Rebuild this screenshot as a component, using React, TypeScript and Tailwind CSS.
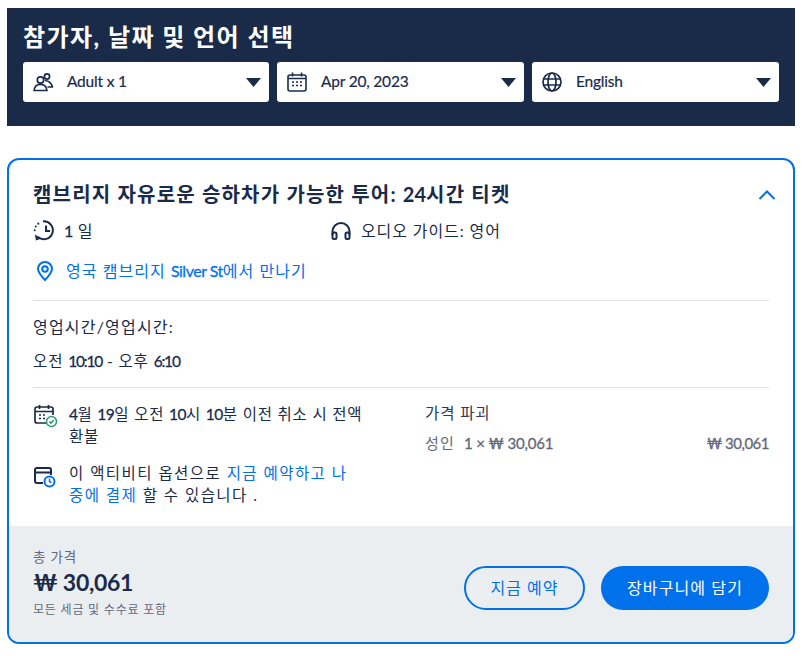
import React from "react";

const L = ({ children }: { children: React.ReactNode }) => (
  <span className="tracking-[-0.5px] [-webkit-text-stroke:0.3px_currentColor]">{children}</span>
);

const N = ({ children }: { children: React.ReactNode }) => (
  <span className="tracking-[-1.2px] [-webkit-text-stroke:0.3px_currentColor]">{children}</span>
);

const Caret = () => (
  <svg width="15" height="9" viewBox="0 0 15 9" className="shrink-0"><path d="M0 0h15L7.500 9z" fill="#1a2b49" /></svg>
);

const Users = () => (
  <svg width="24" height="24" viewBox="0 0 24 24" fill="none" stroke="#1a2b49" strokeWidth="1.7">
    <circle cx="7.500" cy="10" r="3.200" />
    <circle cx="14" cy="6.500" r="2.600" />
    <path d="M1 20.500c.5-4 3-6.200 6.500-6.200s6 2.200 6.500 6.200z" strokeLinejoin="round" />
    <path d="M12 10.500c3.500.3 6.500 2.500 7.500 6.500h-5" strokeLinejoin="round" />
  </svg>
);

const Cal = () => (
  <svg width="20" height="20" viewBox="0 0 20 20" fill="none" stroke="#1a2b49" strokeWidth="1.6">
    <rect x="1" y="3" width="18" height="16" rx="2" />
    <path d="M5.500 0.500v4M14.500 0.500v4M1 6.500h18" />
    <path d="M5 10h2M9 10h2M13 10h2M5 13.500h2M9 13.500h2M13 13.500h2" strokeWidth="1.500" />
  </svg>
);

const Globe = () => (
  <svg width="20" height="20" viewBox="0 0 20 20" fill="none" stroke="#1a2b49" strokeWidth="1.7">
    <circle cx="10" cy="10" r="9" />
    <ellipse cx="10" cy="10" rx="4" ry="9" />
    <path d="M1.500 7h17M1.500 13h17" />
  </svg>
);

const Select = ({ icon, label, width }: { icon: React.ReactNode; label: string; width: string }) => (
  <div className={`flex h-10 items-center rounded-[3px] bg-white pl-2.5 pr-2 ${width}`}>
    <div className="flex w-6 shrink-0 justify-start">{icon}</div>
    <span className="ml-[10px] flex-1 text-[15.500px] tracking-[-0.2px] text-[#1a2b49] [-webkit-text-stroke:0.2px_#1a2b49]">{label}</span>
    <Caret />
  </div>
);

const History = () => (
  <svg width="22" height="22" viewBox="0 0 22 22" fill="none" stroke="#1a2b49" strokeWidth="2">
    <path d="M10 1.300a9 9 0 1 1-5 15.800" />
    <path d="M13 5.500v5.500h4" />
    <path d="M1.800 14.500l1.200 6 5.500-2z" fill="#1a2b49" stroke="none" />
    <path d="M5.300 3.600v.1M2.800 6.500v.1M1.700 10.200v.1" strokeLinecap="round" />
  </svg>
);

const Headphones = () => (
  <svg width="20" height="18" viewBox="0 0 20 18" fill="none" stroke="#1a2b49" strokeWidth="2">
    <path d="M1.500 13V9.500a8.500 8.500 0 0 1 17 0V13" />
    <rect x="1.500" y="10.500" width="4" height="6.500" rx="1.500" />
    <rect x="14.500" y="10.500" width="4" height="6.500" rx="1.500" />
  </svg>
);

const Pin = () => (
  <svg width="16" height="20" viewBox="0 0 16 20" fill="none" stroke="#0071eb" strokeWidth="2">
    <path d="M8 19C4 14.800 1 11.500 1 8a7 7 0 0 1 14 0c0 3.500-3 6.800-7 11z" strokeLinejoin="round" />
    <circle cx="8" cy="8" r="2.800" />
  </svg>
);

const CalCheck = () => (
  <svg width="24" height="24" viewBox="0 0 24 24" fill="none">
    <path d="M12 19H3a2 2 0 0 1-2-2V5a2 2 0 0 1 2-2h14a2 2 0 0 1 2 2v6" stroke="#1a2b49" strokeWidth="1.700" />
    <path d="M5.500 1v4M14.500 1v4M1 7.500h18" stroke="#1a2b49" strokeWidth="1.700" />
    <path d="M5 11h2M9 11h2M5 14.500h2M9 14.500h2" stroke="#1a2b49" strokeWidth="1.500" />
    <circle cx="17.500" cy="17.500" r="5" fill="#fff" stroke="#2a9d6f" strokeWidth="1.500" />
    <path d="M15.300 17.500l1.600 1.600 2.900-3" stroke="#2a9d6f" strokeWidth="1.500" />
  </svg>
);

const CardClock = () => (
  <svg width="22" height="22" viewBox="0 0 22 22" fill="none">
    <path d="M9 17H3a2 2 0 0 1-2-2V4a2 2 0 0 1 2-2h12a2 2 0 0 1 2 2v5" stroke="#1a2b49" strokeWidth="2" />
    <path d="M1 6.500h16" stroke="#1a2b49" strokeWidth="2" />
    <circle cx="15.500" cy="15.500" r="5" fill="#fff" stroke="#0071eb" strokeWidth="2" />
    <path d="M15.500 12.800v2.900l2 1" stroke="#0071eb" strokeWidth="1.500" />
  </svg>
);

export default function App() {
  return (
    <div className="h-[656px] w-[806px] overflow-hidden bg-white pl-[7px] pt-2 text-[#1a2b49]">
      <div className="font-['Lato','Noto_Sans_CJK_KR',sans-serif]">
        <div className="h-[118px] w-[788px] bg-[#1a2b49] px-4 pt-[12px]">
          <h1 className="text-[24px] font-bold leading-[34px] tracking-[1.45px] text-white">참가자, 날짜 및 언어 선택</h1>
          <div className="mt-[8px] flex gap-2">
            <Select icon={<Users />} label="Adult x 1" width="w-[246px]" />
            <Select icon={<Cal />} label="Apr 20, 2023" width="w-[247px]" />
            <Select icon={<Globe />} label="English" width="w-[247px]" />
          </div>
        </div>

        <div className="mt-8 flex h-[486px] w-[788px] flex-col overflow-hidden rounded-xl border-2 border-[#0071eb] bg-white">
          <div className="flex-1 px-6">
            <div className="flex items-center justify-between pt-[20px]">
              <h2 className="text-[20px] font-bold leading-[28px] tracking-[1.2px]">캠브리지 자유로운 승하차가 가능한 투어: <span className="tracking-normal">24</span>시간 티켓</h2>
              <svg width="18" height="10" viewBox="0 0 18 10" fill="none" stroke="#0071eb" strokeWidth="2" className="mr-[-7px] mt-[1px]">
                <path d="M1.500 9L9 1.500 16.500 9" />
              </svg>
            </div>

            <div className="mt-[11px] flex h-[24px] items-center text-[16px] tracking-[0.9px]">
              <div className="flex w-[298px] items-center gap-[9px]"><History /><span><L>1</L> 일</span></div>
              <div className="flex items-center gap-[10px]"><Headphones /><span>오디오 가이드: 영어</span></div>
            </div>

            <div className="mt-[16px] flex h-[24px] items-center gap-[13px] pl-1 text-[16px] tracking-[1.05px] text-[#0071eb]">
              <Pin /><span>영국 캠브리지 <L>Silver St</L>에서 만나기</span>
            </div>

            <div className="mt-[17px] border-t border-[#dcdfe4]" />
            <p className="mt-[14px] text-[16px] leading-6 tracking-[1.2px]">영업시간/영업시간:</p>
            <p className="mt-[10px] text-[15.500px] leading-6 tracking-[0.9px]">오전 <N>10:10</N> - 오후 <N>6:10</N></p>
            <div className="mt-[14px] border-t border-[#dcdfe4]" />

            <div className="mt-[15px] flex">
              <div className="w-[392px] shrink-0">
                <div className="flex gap-[11px]">
                  <div className="ml-[1px] w-[24px] shrink-0 pt-[1px]"><CalCheck /></div>
                  <p className="text-[15.500px] leading-[22px] tracking-[0.8px]"><L>4</L>월 <L>19</L>일 오전 <L>10</L>시 <L>10</L>분 이전 취소 시 전액<br />환불</p>
                </div>
                <div className="mt-[14px] flex gap-[11px]">
                  <div className="ml-[1px] w-[24px] shrink-0 pt-[5px]"><CardClock /></div>
                  <p className="pt-[1px] text-[15.500px] leading-[22px] tracking-[1.45px]">
                    이 액티비티 옵션으로 <span className="text-[#0071eb]">지금 예약하고 나<br />중에 결제</span> 할 수 있습니다 .
                  </p>
                </div>
              </div>
              <div className="mt-[-1px] flex-1">
                <p className="text-[15.500px] leading-[22px] tracking-[0.9px] text-[#2c3a55]">가격 파괴</p>
                <div className="mt-[8px] flex justify-between text-[15px] leading-[22px] text-[#63687a]">
                  <span><span className="tracking-[1.2px]">성인</span><span className="ml-[9px] tracking-[-0.2px] [-webkit-text-stroke:0.3px_currentColor]">1 × ₩ 30,061</span></span>
                  <L>₩ 30,061</L>
                </div>
              </div>
            </div>
          </div>

          <div className="flex h-[116px] items-center justify-between bg-[#ebeef1] px-6">
            <div className="pb-[2px]">
              <p className="text-[13.500px] leading-5 tracking-[0.8px] text-[#63687a]">총 가격</p>
              <p className="text-[23px] font-bold leading-[30px] tracking-[-0.3px]">₩ 30,061</p>
              <p className="mt-[3px] text-[12px] leading-5 tracking-[0.8px] text-[#63687a]">모든 세금 및 수수료 포함</p>
            </div>
            <div className="mt-2 flex gap-4">
              <div className="flex h-11 w-[121px] items-center justify-center rounded-full border-2 border-[#0071eb] text-[16px] tracking-[1px] text-[#0071eb]">지금 예약</div>
              <div className="flex h-11 w-[168px] items-center justify-center rounded-full bg-[#0071eb] text-[16px] tracking-[1.1px] text-white">장바구니에 담기</div>
            </div>
          </div>
        </div>
      </div>
    </div>
  );
}
